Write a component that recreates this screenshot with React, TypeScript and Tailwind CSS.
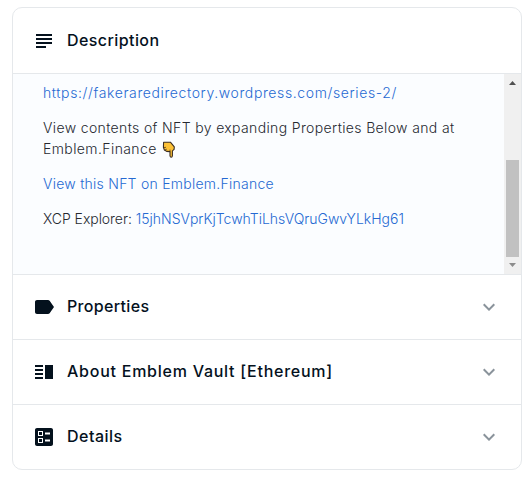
import React from 'react';
import { MdBallot, MdExpandMore, MdLabel, MdSubject, MdVerticalSplit } from 'react-icons/md';

const sections = [
  { title: 'Properties', icon: MdLabel, spacing: 'tracking-[0.33px]' },
  { title: 'About Emblem Vault [Ethereum]', icon: MdVerticalSplit, spacing: 'tracking-[0.75px]' },
  { title: 'Details', icon: MdBallot, spacing: 'tracking-[0.5px]' },
];

const PointingDown = () => (
  <svg className="ml-[5px] inline-block align-[-4px]" width="14" height="17" viewBox="0 0 14 17">
    <path
      d="M1.6 1.2h6.8l3.9 4.6-.2 2.6-1.7 1.4v5q-.1 1.4-1.2 1.4t-1.2-1.4v-4.2L4.6 10.4 2.4 9 1.4 6.4z"
      fill="#fcc136"
      stroke="#3a2d22"
      strokeWidth="1.1"
      strokeLinejoin="round"
    />
    <path d="M1.8 6.6l2.2-.3M2.8 8.9l2-.7M8 10.4V8.6" fill="none" stroke="#3a2d22" strokeWidth=".7" />
  </svg>
);

const Scrollbar = () => (
  <div className="flex h-full w-[17px] shrink-0 flex-col items-center bg-[#f0f0f0]">
    <svg width="17" height="17" viewBox="0 0 17 17">
      <path d="M5 11l3.5-4 3.5 4z" fill="#505050" />
    </svg>
    <div className="mt-[69px] h-[97px] w-[13px] bg-[#c1c1c1]" />
    <svg width="17" height="17" viewBox="0 0 17 17">
      <path d="M5 6l3.5 4L12 6z" fill="#8c8c8c" />
    </svg>
  </div>
);

const App = () => {
  return (
    <div className="h-[491px] bg-white pt-[7px] pl-3 font-['Inter','Liberation_Sans',sans-serif]">
      <div className="w-[510px] overflow-hidden rounded-[10px] border border-[#e5e8eb] text-[#04111d]">
        <div className="flex h-[65px] items-center pt-px pl-[19px]">
          <MdSubject size={24} />
          <h2 className="mb-0.5 ml-[11px] text-base font-medium tracking-[0.42px] whitespace-nowrap">Description</h2>
        </div>

        <div className="flex h-[202px] border-y border-[#e5e8eb] bg-[#fbfdff]">
          <div className="flex-1 space-y-[14px] pt-2 pl-[30px] text-sm leading-[21px] font-light whitespace-nowrap text-[#262930]">
            <p>
              <a className="tracking-[0.61px] text-[#2569d2]">https://fakeraredirectory.wordpress.com/series-2/</a>
            </p>
            <p>
              <span className="tracking-[0.36px]">View contents of NFT by expanding Properties Below and at</span>
              <br />
              <span className="tracking-[0.4px]">Emblem.Finance</span>
              <PointingDown />
            </p>
            <p>
              <a className="tracking-[0.25px] text-[#2569d2]">View this NFT on Emblem.Finance</a>
            </p>
            <p>
              <span className="tracking-[-0.05px]">XCP Explorer: </span>
              <a className="tracking-[-0.01px] text-[#2569d2]">15jhNSVprKjTcwhTiLhsVQruGwvYLkHg61</a>
            </p>
          </div>
          <Scrollbar />
        </div>

        {sections.map(({ title, icon: Icon, spacing }) => (
          <div
            key={title}
            className="flex h-[65px] items-center border-b border-[#e5e8eb] pr-5 pl-[19px] last:h-16 last:border-b-0"
          >
            <Icon size={24} />
            <h2 className={`mb-0.5 ml-[11px] flex-1 text-base font-medium whitespace-nowrap ${spacing}`}>{title}</h2>
            <MdExpandMore size={24} color="#8a939b" />
          </div>
        ))}
      </div>
    </div>
  );
};

export default App;
